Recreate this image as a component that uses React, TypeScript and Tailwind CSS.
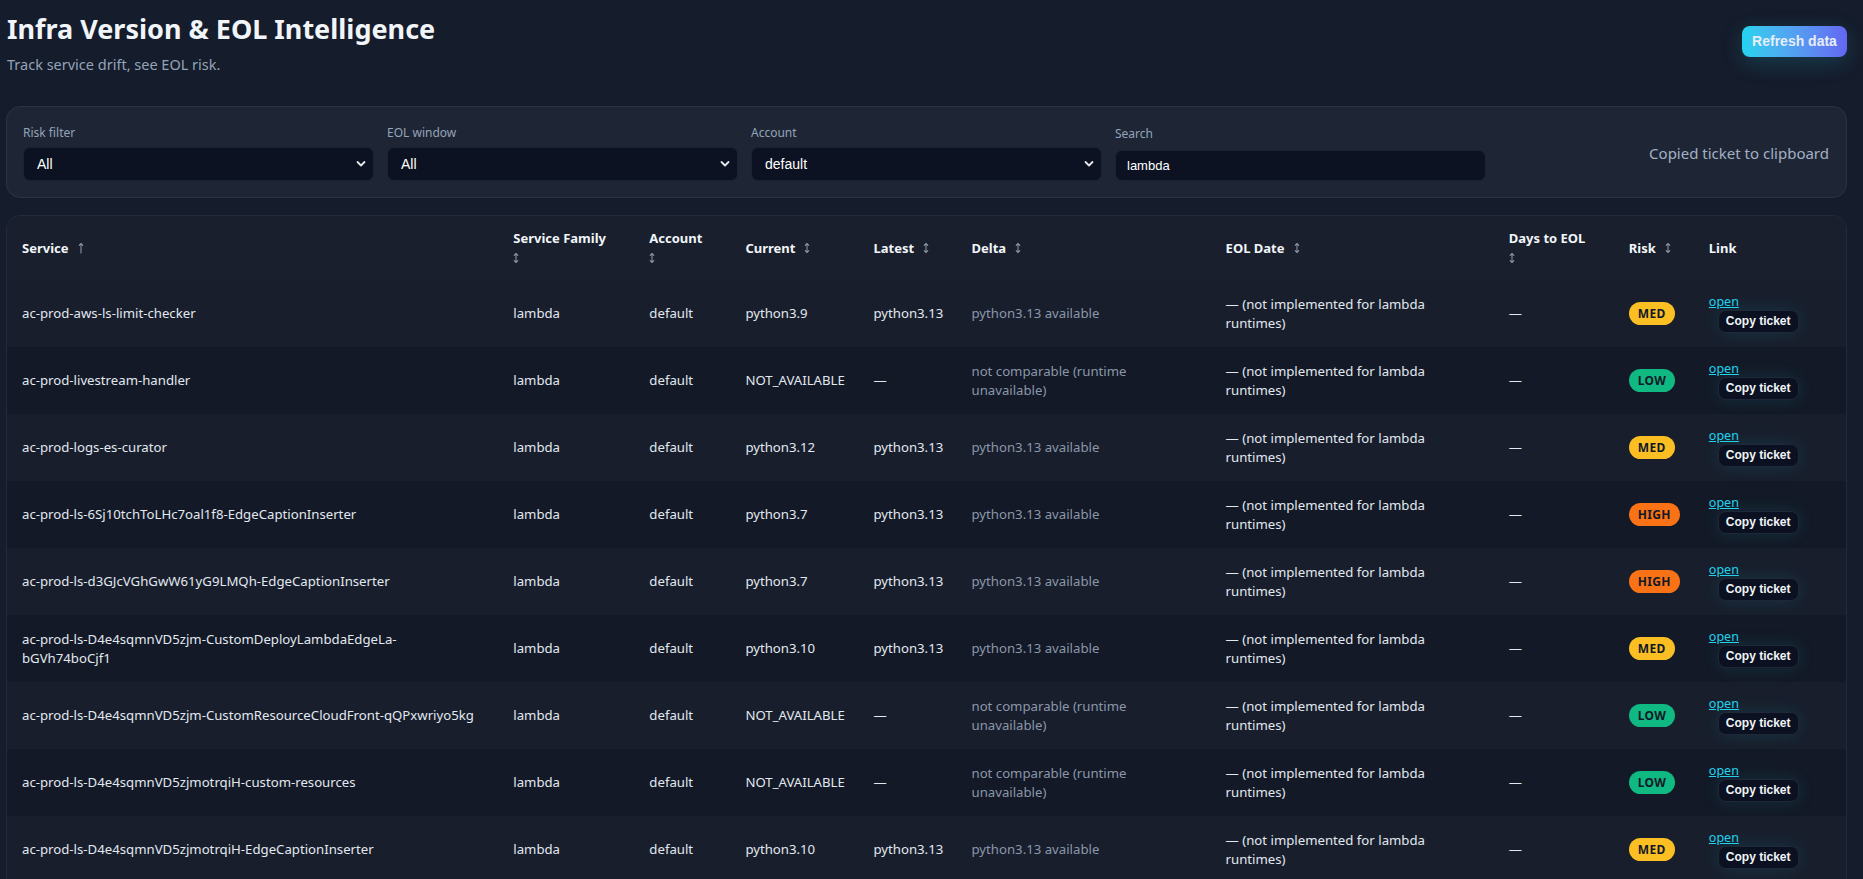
import React from "react";

type Risk = "LOW" | "MED" | "HIGH";
type Row = {
  service: string;
  current: string;
  latest: string;
  delta: string;
  risk: Risk;
};

const rows: Row[] = [
  { service: "ac-prod-aws-ls-limit-checker", current: "python3.9", latest: "python3.13", delta: "python3.13 available", risk: "MED" },
  { service: "ac-prod-livestream-handler", current: "NOT_AVAILABLE", latest: "—", delta: "not comparable (runtime unavailable)", risk: "LOW" },
  { service: "ac-prod-logs-es-curator", current: "python3.12", latest: "python3.13", delta: "python3.13 available", risk: "MED" },
  { service: "ac-prod-ls-6Sj10tchToLHc7oal1f8-EdgeCaptionInserter", current: "python3.7", latest: "python3.13", delta: "python3.13 available", risk: "HIGH" },
  { service: "ac-prod-ls-d3GJcVGhGwW61yG9LMQh-EdgeCaptionInserter", current: "python3.7", latest: "python3.13", delta: "python3.13 available", risk: "HIGH" },
  { service: "ac-prod-ls-D4e4sqmnVD5zjm-CustomDeployLambdaEdgeLa-bGVh74boCjf1", current: "python3.10", latest: "python3.13", delta: "python3.13 available", risk: "MED" },
  { service: "ac-prod-ls-D4e4sqmnVD5zjm-CustomResourceCloudFront-qQPxwriyo5kg", current: "NOT_AVAILABLE", latest: "—", delta: "not comparable (runtime unavailable)", risk: "LOW" },
  { service: "ac-prod-ls-D4e4sqmnVD5zjmotrqiH-custom-resources", current: "NOT_AVAILABLE", latest: "—", delta: "not comparable (runtime unavailable)", risk: "LOW" },
  { service: "ac-prod-ls-D4e4sqmnVD5zjmotrqiH-EdgeCaptionInserter", current: "python3.10", latest: "python3.13", delta: "python3.13 available", risk: "MED" },
  { service: "ac-prod-ls-D4e4sqmnVD5zjmotrqiH-OriginRequestHandler", current: "python3.11", latest: "python3.13", delta: "python3.13 available", risk: "MED" },
];

const riskClass: Record<Risk, string> = {
  LOW: "bg-[#10b981]",
  MED: "bg-[#fbbf24]",
  HIGH: "bg-[#f97316]",
};

function Chevron() {
  return (
    <svg width="10" height="7" viewBox="0 0 10 7" className="pointer-events-none absolute right-[8px] top-1/2 -translate-y-1/2">
      <polyline points="1.5,1.5 5,5 8.5,1.5" fill="none" stroke="#e5e7eb" strokeWidth="1.8" strokeLinecap="round" strokeLinejoin="round" />
    </svg>
  );
}

function SortIcon({ up = false }: { up?: boolean }) {
  return (
    <svg width="6" height="12" viewBox="0 0 6 12" className="inline-block align-[-1px]">
      <path
        d={up ? "M3 1.5V11 M1.2 3.4 L3 1.5 L4.8 3.4" : "M3 1.5V10.5 M1.2 3.4 L3 1.5 L4.8 3.4 M1.2 8.6 L3 10.5 L4.8 8.6"}
        fill="none"
        stroke="#8893a5"
        strokeWidth="1.1"
        strokeLinecap="round"
        strokeLinejoin="round"
      />
    </svg>
  );
}

function SelectField({ label, value, options }: { label: string; value: string; options: string[] }) {
  return (
    <div className="flex w-[351px] flex-col gap-[6px]">
      <label className="text-[12px] leading-[16px] text-[#94a3b8]">{label}</label>
      <div className="relative">
        <select
          defaultValue={value}
          className="h-[34px] w-full appearance-none rounded-[7px] border border-[#1b2232] bg-[#0c1221] pl-[13px] pr-[28px] text-[14px] text-white outline-none [font-family:'Liberation_Sans',Arial,sans-serif]"
        >
          {options.map((o) => (
            <option key={o} value={o}>
              {o}
            </option>
          ))}
        </select>
        <Chevron />
      </div>
    </div>
  );
}

function Th({ children, sort = "both", wrap = false }: { children: React.ReactNode; sort?: "both" | "up" | "none"; wrap?: boolean }) {
  return (
    <th className="px-[15px] py-[12px] text-left align-middle text-[13px] font-bold leading-[20px] text-[#f1f5f9]">
      {children}
      {sort !== "none" && (
        <span className={`${wrap ? "block" : "ml-[9px] inline-block"} font-normal`}>
          <SortIcon up={sort === "up"} />
        </span>
      )}
    </th>
  );
}

export default function App() {
  return (
    <div className="min-h-screen bg-[#151c2b] pl-[6px] pr-[16px] text-[#e2e8f0] [font-family:'Noto_Sans',sans-serif]">
      <header className="flex items-start justify-between pt-[12px]">
        <div className="pl-[1px]">
          <h1 className="text-[27px] font-bold leading-[34px] text-[#f1f5f9]">Infra Version &amp; EOL Intelligence</h1>
          <p className="mt-[8px] text-[14.5px] leading-[20px] text-[#94a3b8]">Track service drift, see EOL risk.</p>
        </div>
        <button className="mt-[14px] h-[31px] w-[105px] rounded-[8px] bg-gradient-to-r from-[#22d3ee] to-[#6366f1] text-[14px] font-bold text-[#e8eef7] shadow-[0_6px_22px_rgba(34,211,238,0.18)] [font-family:'Liberation_Sans',Arial,sans-serif]">
          Refresh data
        </button>
      </header>

      <section className="mt-[32px] flex h-[92px] items-end rounded-[14px] border border-[#2a3345] bg-[#1e2636] pb-[16px] pl-[16px] pr-[17px]">
        <div className="flex items-end gap-[13px]">
          <SelectField label="Risk filter" value="All" options={["All", "HIGH", "MED", "LOW"]} />
          <SelectField label="EOL window" value="All" options={["All", "30 days", "90 days", "180 days"]} />
          <SelectField label="Account" value="default" options={["default"]} />
          <div className="flex w-[371px] flex-col gap-[8px]">
            <label className="text-[12px] leading-[16px] text-[#94a3b8]">Search</label>
            <input
              defaultValue="lambda"
              className="h-[31px] w-full rounded-[7px] border border-[#1b2232] bg-[#0c1221] px-[11px] text-[13px] text-white outline-none [font-family:'Liberation_Sans',Arial,sans-serif]"
            />
          </div>
        </div>
        <div className="ml-auto self-center pt-[18px] text-[15px] text-[#a3b0c2]">Copied ticket to clipboard</div>
      </section>

      <div className="mt-[17px] overflow-hidden rounded-[14px] border border-[#232b3b] bg-[#191f2d]">
        <table className="w-full table-fixed border-collapse">
          <colgroup>
            <col className="w-[491px]" />
            <col className="w-[136px]" />
            <col className="w-[96px]" />
            <col className="w-[128px]" />
            <col className="w-[98px]" />
            <col className="w-[254px]" />
            <col className="w-[283px]" />
            <col className="w-[120px]" />
            <col className="w-[80px]" />
            <col className="w-[152px]" />
          </colgroup>
          <thead>
            <tr className="bg-[#191f2d]">
              <Th sort="up">Service</Th>
              <Th wrap>Service Family</Th>
              <Th wrap>Account</Th>
              <Th>Current</Th>
              <Th>Latest</Th>
              <Th>Delta</Th>
              <Th>EOL Date</Th>
              <Th wrap>Days to EOL</Th>
              <Th>Risk</Th>
              <Th sort="none">Link</Th>
            </tr>
          </thead>
          <tbody className="text-[13.2px] leading-[19px]">
            {rows.map((r, i) => (
              <tr key={r.service} className={i % 2 === 0 ? "bg-[#181e2c]" : "bg-[#131926]"}>
                <td className="px-[15px] py-[14px] align-middle text-[#e2e8f0]">{r.service}</td>
                <td className="px-[15px] py-[14px] align-middle">lambda</td>
                <td className="px-[15px] py-[14px] align-middle">default</td>
                <td className="px-[15px] py-[14px] align-middle">{r.current}</td>
                <td className="px-[15px] py-[14px] align-middle">{r.latest}</td>
                <td className="px-[15px] py-[14px] align-middle text-[#8b97a9]">{r.delta}</td>
                <td className="px-[15px] py-[14px] align-middle">— (not implemented for lambda runtimes)</td>
                <td className="px-[15px] py-[14px] align-middle">—</td>
                <td className="px-[15px] py-[14px] align-middle">
                  <span
                    className={`inline-flex h-[23px] items-center rounded-full px-[9px] text-[12px] font-bold tracking-[0.3px] text-[#111827] ${riskClass[r.risk]}`}
                  >
                    {r.risk}
                  </span>
                </td>
                <td className="px-[15px] py-[14px] align-middle">
                  <a href="#" className="block text-[12.5px] leading-[16px] text-[#22d3ee] underline">
                    open
                  </a>
                  <button className="ml-[9px] h-[23px] rounded-[8px] border border-[#1f2838] bg-[#0b1120] px-[7px] text-[12px] font-bold text-[#f1f5f9] shadow-[0_0_18px_rgba(34,211,238,0.12)] [font-family:'Liberation_Sans',Arial,sans-serif]">
                    Copy ticket
                  </button>
                </td>
              </tr>
            ))}
          </tbody>
        </table>
      </div>
    </div>
  );
}
